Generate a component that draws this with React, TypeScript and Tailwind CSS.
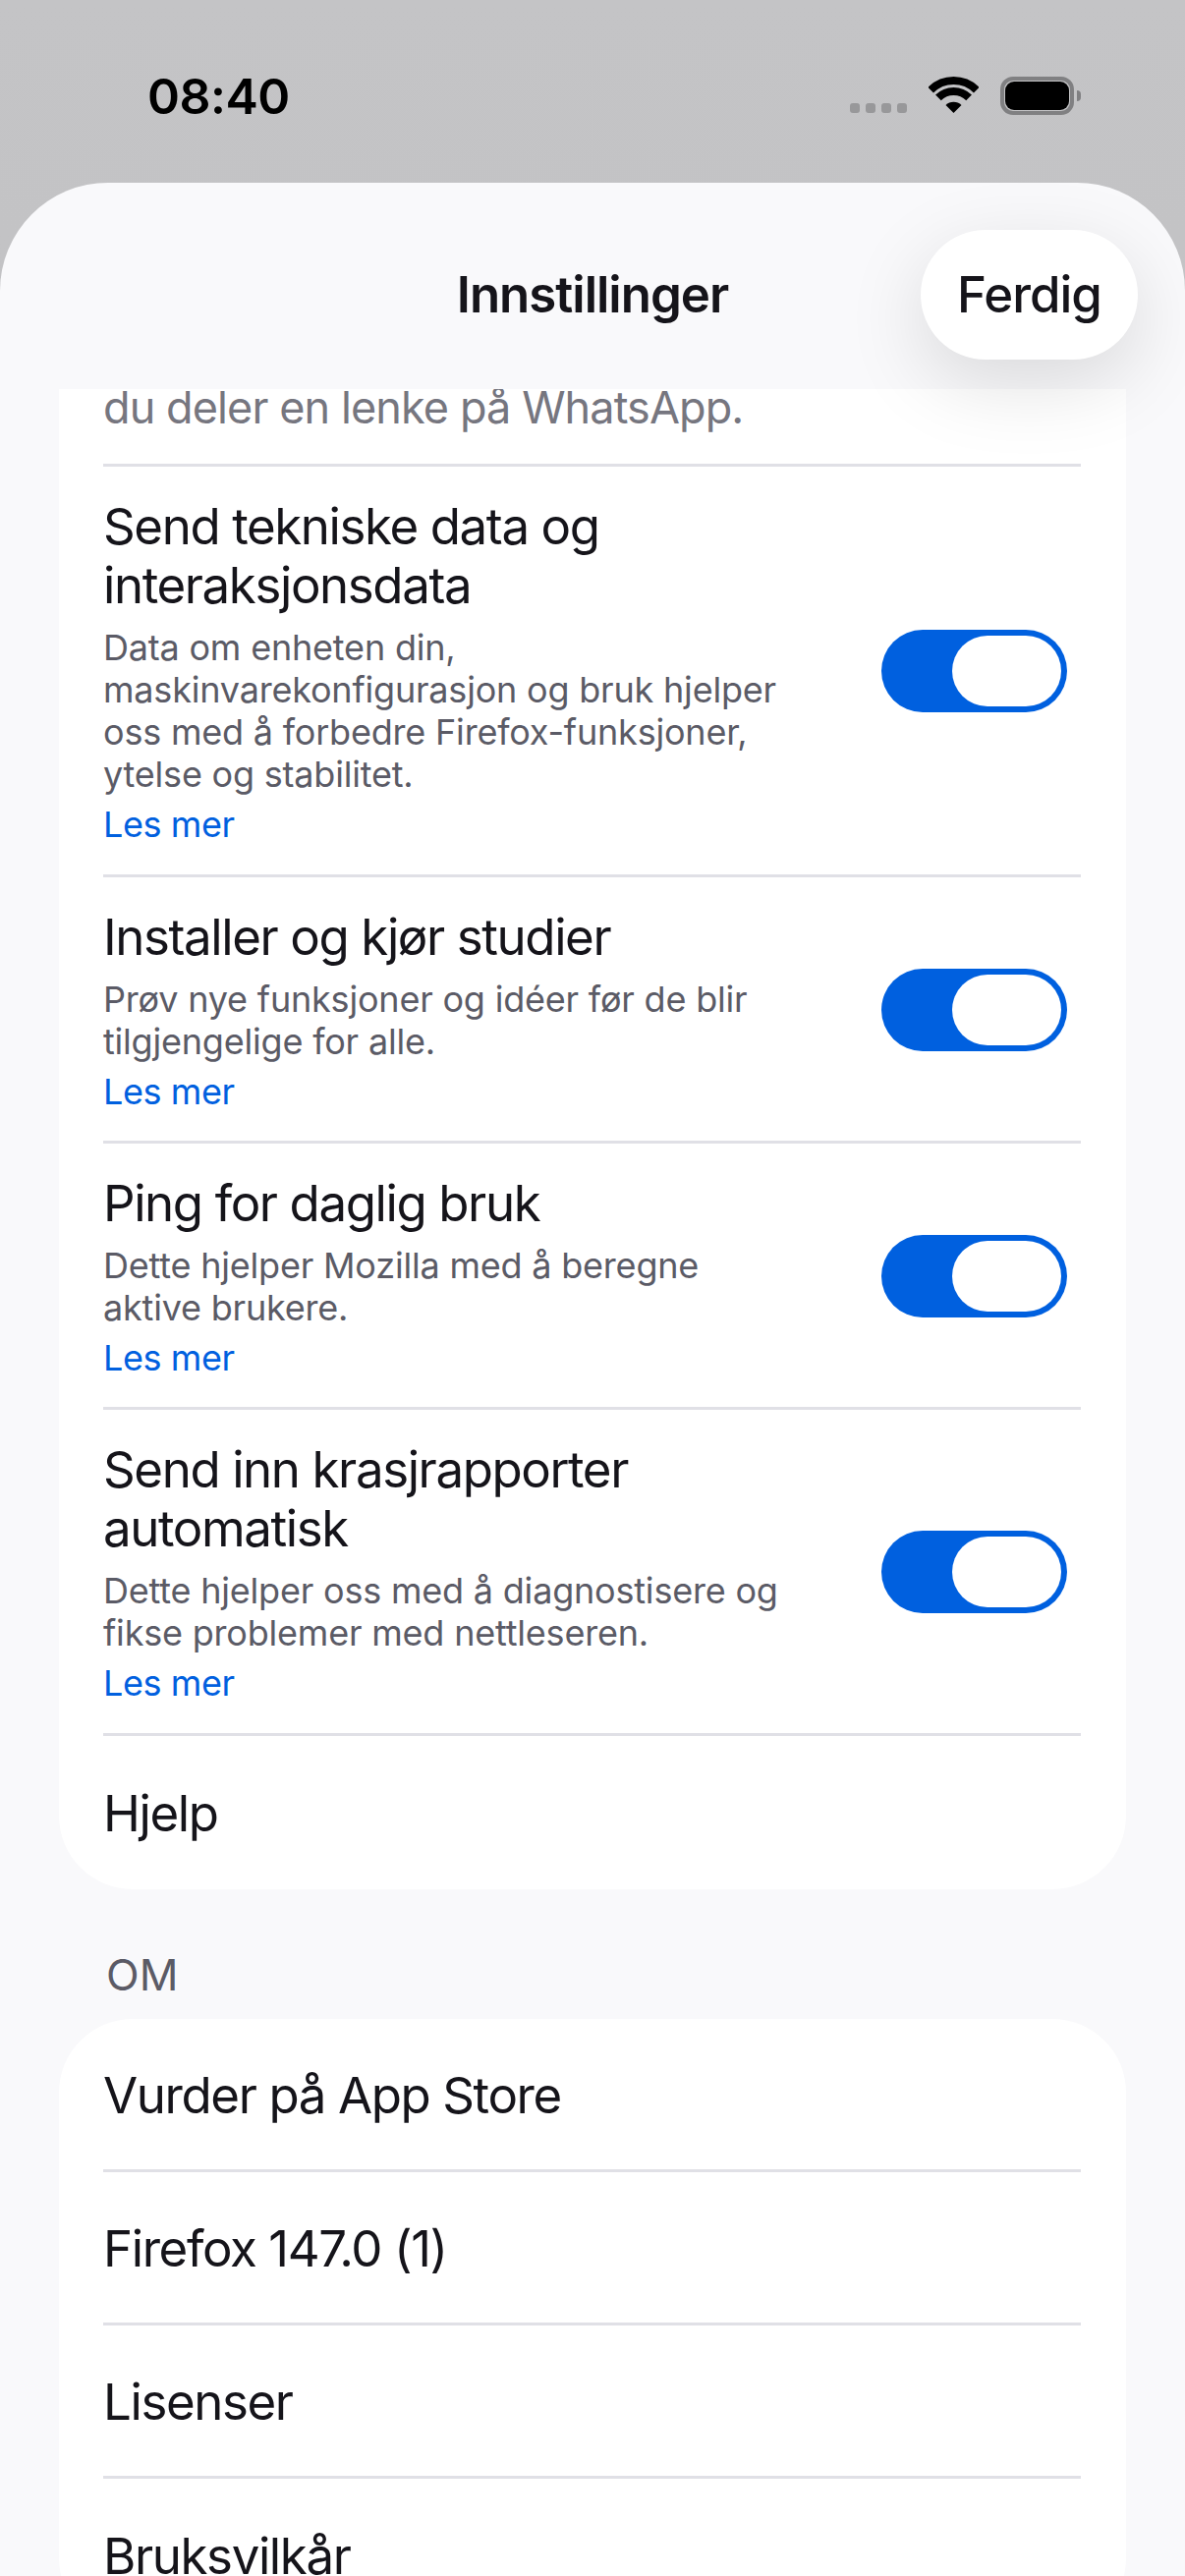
import React from "react";

const Toggle = () => (
  <div className="flex h-[84px] w-[189px] shrink-0 items-center justify-end rounded-full bg-[#0060df] p-[6px]">
    <div className="h-[72px] w-[111px] rounded-full bg-white" />
  </div>
);

const Row = ({ title, desc, pad = "pb-[29px]" }: { title: React.ReactNode; desc: React.ReactNode; pad?: string }) => (
  <div className={`flex items-center justify-between border-b-[3px] border-[#e0e0e6] pt-[31px] pr-[14px] ${pad}`}>
    <div>
      <div className="text-[51px] leading-[60px] tracking-[-1.4px] text-[#15141a]">{title}</div>
      <div className="mt-[12px] text-[36px] leading-[43px] tracking-[-0.2px] text-[#5b5b66]">{desc}</div>
      <div className="mt-[8px] text-[36px] leading-[42px] tracking-[-0.4px] text-[#0060df]">Les mer</div>
    </div>
    <Toggle />
  </div>
);

const Plain = ({ label, last }: { label: string; last?: boolean }) => (
  <div
    className={`flex h-[156px] items-center pt-[3px] text-[51px] tracking-[-1.4px] text-[#15141a] ${
      last ? "" : "border-b-[3px] border-[#e0e0e6]"
    }`}
  >
    {label}
  </div>
);

const StatusBar = () => (
  <div className="flex h-[186px] shrink-0 items-start justify-between pt-[71px] pl-[150px] pr-[106px]">
    <span className="text-[50px] leading-[54px] font-semibold tracking-[-0.5px] text-black">08:40</span>
    <div className="mt-[7px] flex items-end">
      <div className="mb-[2px] flex gap-[6px]">
        <span className="h-[10px] w-[10px] rounded-[3px] bg-[#98989a]" />
        <span className="h-[10px] w-[10px] rounded-[3px] bg-[#98989a]" />
        <span className="h-[10px] w-[10px] rounded-[3px] bg-[#98989a]" />
        <span className="h-[10px] w-[10px] rounded-[3px] bg-[#98989a]" />
      </div>
      <svg className="mb-[2px] ml-[22px]" width="51" height="37" viewBox="0 0 51 37" fill="none">
        <path d="M2.2 13.7A33 33 0 0 1 48.8 13.7" stroke="#000" strokeWidth="8" />
        <path d="M9.9 21.4A22 22 0 0 1 41.1 21.4" stroke="#000" strokeWidth="8" />
        <path d="M25.5 37L17.5 29A11.3 11.3 0 0 1 33.5 29Z" fill="#000" />
      </svg>
      <div className="ml-[22px] flex items-center">
        <div className="h-[39px] w-[75px] rounded-[13px] border-[4px] border-[#808082] p-[1px]">
          <div className="h-full w-full rounded-[9px] bg-black" />
        </div>
        <div className="ml-[3px] h-[11px] w-[4px] rounded-r-full bg-[#808082]" />
      </div>
    </div>
  </div>
);

export default function App() {
  return (
    <div
      className="flex h-[2622px] w-[1206px] flex-col overflow-hidden bg-gradient-to-b from-[#c4c4c6] to-[#b9b9bb]"
      style={{ fontFamily: "Inter, 'Noto Sans', sans-serif" }}
    >
      <StatusBar />
      <div className="flex min-h-0 flex-1 flex-col overflow-hidden rounded-t-[110px] bg-[#f9f9fb]">
        {/* Header */}
        <div className="relative z-10 grid h-[210px] shrink-0 grid-cols-[1fr_auto_1fr] items-center pt-[18px]">
          <div />
          <div className="text-[51px] font-semibold tracking-[-1px] text-[#15141a]">Innstillinger</div>
          <div className="flex justify-end pr-[48px]">
            <button className="h-[132px] w-[221px] rounded-full bg-white text-[51px] font-medium tracking-[-1px] text-[#15141a] shadow-[0_24px_80px_rgba(0,0,0,0.13)]">
              Ferdig
            </button>
          </div>
        </div>

        {/* Content */}
        <div className="px-[60px]">
          <div className="rounded-b-[75px] bg-white pl-[45px] pr-[46px]">
            <div className="flex h-[79px] items-end overflow-hidden border-b-[3px] border-[#e0e0e6] pb-[30px] text-[45px] leading-[54px] tracking-[-0.9px] text-[#76767f]">
              du deler en lenke på WhatsApp.
            </div>
            <Row
              pad="pb-[30px]"
              title={<>Send tekniske data og<br />interaksjonsdata</>}
              desc={<>Data om enheten din,<br />maskinvarekonfigurasjon og bruk hjelper<br />oss med å forbedre Firefox-funksjoner,<br />ytelse og stabilitet.</>}
            />
            <Row
              title="Installer og kjør studier"
              desc={<>Prøv nye funksjoner og idéer før de blir<br />tilgjengelige for alle.</>}
            />
            <Row
              title="Ping for daglig bruk"
              desc={<>Dette hjelper Mozilla med å beregne<br />aktive brukere.</>}
            />
            <Row
              pad="pb-[30px]"
              title={<>Send inn krasjrapporter<br />automatisk</>}
              desc={<>Dette hjelper oss med å diagnostisere og<br />fikse problemer med nettleseren.</>}
            />
            <Plain label="Hjelp" last />
          </div>

          <div className="mt-[62px] pl-[48px] text-[44px] leading-[50px] text-[#5b5b66]">OM</div>

          <div className="mt-[20px] rounded-[75px] bg-white pl-[45px] pr-[46px]">
            <Plain label="Vurder på App Store" />
            <Plain label="Firefox 147.0 (1)" />
            <Plain label="Lisenser" />
            <Plain label="Bruksvilkår" last />
          </div>
        </div>
      </div>
    </div>
  );
}
